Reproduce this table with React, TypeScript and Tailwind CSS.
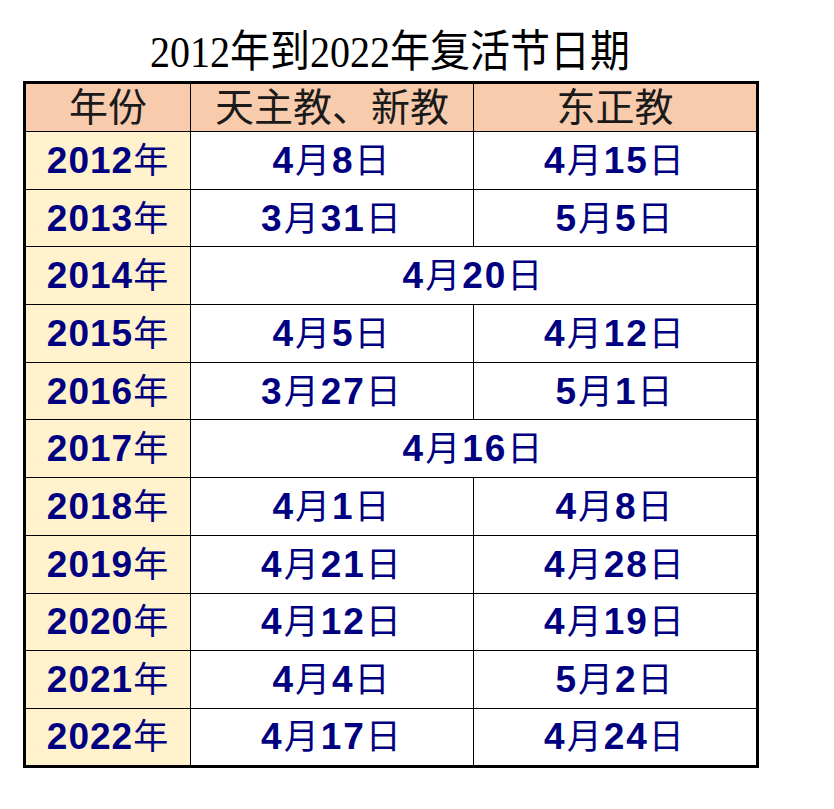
import React from "react";

type Row = { year: string; a: string; b?: string };

const rows: Row[] = [
  { year: "2012", a: "4月8日", b: "4月15日" },
  { year: "2013", a: "3月31日", b: "5月5日" },
  { year: "2014", a: "4月20日" },
  { year: "2015", a: "4月5日", b: "4月12日" },
  { year: "2016", a: "3月27日", b: "5月1日" },
  { year: "2017", a: "4月16日" },
  { year: "2018", a: "4月1日", b: "4月8日" },
  { year: "2019", a: "4月21日", b: "4月28日" },
  { year: "2020", a: "4月12日", b: "4月19日" },
  { year: "2021", a: "4月4日", b: "5月2日" },
  { year: "2022", a: "4月17日", b: "4月24日" },
];

function DateText({ text }: { text: string }) {
  const parts = text.split(/(\d+)/).filter((p) => p.length > 0);
  return (
    <span className="tracking-[2px]">
      {parts.map((p, i) =>
        /\d/.test(p) ? (
          <span key={i} className="font-bold text-[37px]">
            {p}
          </span>
        ) : (
          <span key={i} className="font-normal text-[35px]">
            {p}
          </span>
        )
      )}
    </span>
  );
}

export default function App() {
  return (
    <div className="w-[834px] h-[809px] bg-white">
      <div className="ml-[23px] w-[734px] pt-[26px]">
        <div
          className="text-center text-[40px] leading-[52px] text-black scale-y-[1.12]"
          style={{ fontFamily: '"Liberation Serif", "Noto Sans CJK SC", serif' }}
        >
          2012年到2022年复活节日期
        </div>
        <table
          className="mt-[3px] w-[733px] border-collapse border-[3px] border-black table-fixed"
          style={{ fontFamily: '"Liberation Sans", "Noto Sans CJK SC", sans-serif' }}
        >
          <colgroup>
            <col className="w-[166px]" />
            <col className="w-[283px]" />
            <col className="w-[284px]" />
          </colgroup>
          <thead>
            <tr className="h-[49px] bg-[#f8cbad]">
              <th className="border border-black text-[39px] font-normal leading-none text-[#1a1a1a]">年份</th>
              <th className="border border-black text-[39px] font-normal leading-none text-[#1a1a1a]">天主教、新教</th>
              <th className="border border-black text-[39px] font-normal leading-none text-[#1a1a1a]">东正教</th>
            </tr>
          </thead>
          <tbody>
            {rows.map((r) => (
              <tr key={r.year} className="h-[57.7px]">
                <td className="border border-black bg-[#fff2cc] text-center leading-none text-[#000080]">
                  <span className="tracking-[1px]">
                    <span className="font-bold text-[37px]">{r.year}</span>
                    <span className="font-normal text-[35px]">年</span>
                  </span>
                </td>
                {r.b ? (
                  <>
                    <td className="border border-black text-center leading-none text-[#000080]">
                      <DateText text={r.a} />
                    </td>
                    <td className="border border-black text-center leading-none text-[#000080]">
                      <DateText text={r.b} />
                    </td>
                  </>
                ) : (
                  <td
                    colSpan={2}
                    className="border border-black text-center leading-none text-[#000080]"
                  >
                    <DateText text={r.a} />
                  </td>
                )}
              </tr>
            ))}
          </tbody>
        </table>
      </div>
    </div>
  );
}
